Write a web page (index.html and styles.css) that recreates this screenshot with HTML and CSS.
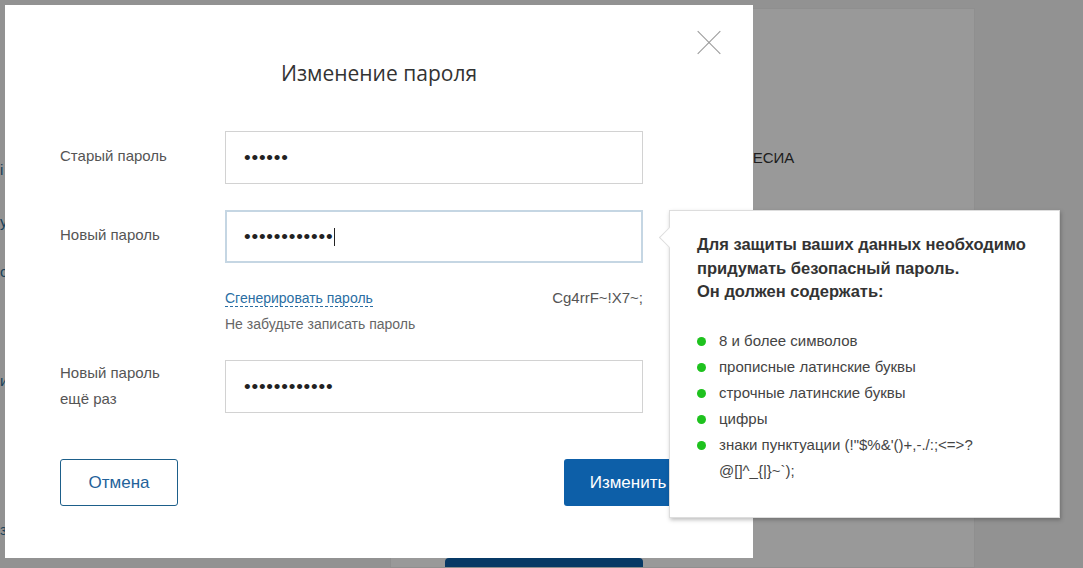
FILE: index.html
```html
<!DOCTYPE html>
<html lang="ru">
<head>
  <meta charset="UTF-8" />
  <meta name="viewport" content="width=device-width, initial-scale=1.0"/>
  <title>Изменение пароля</title>
  <link rel="stylesheet" href="styles.css">
</head>
<body>

  <div class="page">
    <div class="sidebar">
      <a class="side-link s1">і</a>
      <a class="side-link s2">у</a>
      <a class="side-link s3">с</a>
      <a class="side-link s4">и</a>
      <a class="side-link s5">з</a>
    </div>
    <div class="card">
      <div class="card-text">Учётная запись ЕСИА</div>
      <div class="card-btn"></div>
    </div>
  </div>

  <div class="overlay"></div>

  <div class="modal">
    <div class="close"></div>
    <h2>Изменение пароля</h2>

    <div class="form">
      <div class="row">
        <div class="label">Старый пароль</div>
        <div class="field">••••••</div>
      </div>

      <div class="row">
        <div class="label">Новый пароль</div>
        <div class="field focused">••••••••••••<span class="caret"></span></div>
      </div>

      <div class="gen">
        <a class="gen-link">Сгенерировать пароль</a>
        <span class="gen-value">Cg4rrF~!X7~;</span>
      </div>
      <div class="gen-note">Не забудьте записать пароль</div>

      <div class="row">
        <div class="label two-lines">Новый пароль<br>ещё раз</div>
        <div class="field">••••••••••••</div>
      </div>
    </div>

    <div class="buttons">
      <button class="btn btn-cancel">Отмена</button>
      <button class="btn btn-save">Изменить</button>
    </div>
  </div>

  <div class="hint">
    <p class="hint-title">Для защиты ваших данных необходимо придумать безопасный пароль.<br>Он должен содержать:</p>
    <ul class="rules">
      <li>8 и более символов</li>
      <li>прописные латинские буквы</li>
      <li>строчные латинские буквы</li>
      <li>цифры</li>
      <li>знаки пунктуации (!"$%&amp;'()+,-./:;&lt;=&gt;?<br>@[]^_{|}~`);</li>
    </ul>
  </div>

</body>
</html>
```

FILE: styles.css
```css
body {
  margin: 0;
  font-family: "Liberation Sans", Arial, sans-serif;
  background: #f4f4f4;
  color: #333;
  height: 100vh;
  overflow: hidden;
  position: relative;
}

/* page behind the dialog */
.page {
  display: flex;
  height: 100vh;
  overflow: hidden;
}
.sidebar {
  width: 390px;
  display: flex;
  flex-direction: column;
  padding-top: 160px;
}
.side-link {
  color: #2b6c96;
  font-size: 15px;
  line-height: 20px;
}
.s2 { margin-top: 32px; }
.s3 { margin-top: 30px; }
.s4 { margin-top: 89px; }
.s5 { margin-top: 129px; }
.card {
  width: 583px;
  margin-top: 8px;
  background: #fff;
  border: 1px solid #eee;
  position: relative;
  overflow: hidden;
}
.card-text {
  margin-top: 140px;
  padding-left: 249px;
  font-size: 15px;
  color: #333;
}
.card-btn {
  position: absolute;
  left: 54px;
  top: 549px;
  width: 198px;
  height: 44px;
  border-radius: 4px;
  background: #0d5fa8;
}
.overlay {
  position: absolute;
  inset: 0;
  background: rgba(0, 0, 0, 0.4);
}

/* dialog */
.modal {
  position: absolute;
  left: 5px;
  top: 5px;
  width: 748px;
  height: 553px;
  background: #fff;
  box-sizing: border-box;
  padding: 53px 110px 0 55px;
}
.close {
  position: absolute;
  left: 692px;
  top: 26px;
  width: 24px;
  height: 24px;
}
.close::before,
.close::after {
  content: "";
  position: absolute;
  left: -4px;
  top: 11px;
  width: 32px;
  height: 1px;
  background: #999;
  transform: rotate(45deg);
}
.close::after {
  transform: rotate(-45deg);
}
h2 {
  margin: 0 0 0 55px;
  font-family: "Open Sans", sans-serif;
  font-weight: 400;
  font-size: 21px;
  line-height: 30px;
  color: #333;
  text-align: center;
}
.form {
  margin-top: 43px;
}
.row {
  display: flex;
  margin-bottom: 26px;
}
.label {
  width: 165px;
  padding-top: 12px;
  font-size: 15px;
  line-height: 26px;
  color: #555;
}
.label.two-lines {
  padding-top: 0;
}
.field {
  width: 418px;
  height: 53px;
  box-sizing: border-box;
  border: 1px solid #d2d2d2;
  padding-left: 18px;
  font-size: 19px;
  letter-spacing: 0.8px;
  color: #222;
  display: flex;
  align-items: center;
}
.field.focused {
  border: 2px solid #c5d6e3;
  padding-left: 17px;
}
.caret {
  display: inline-block;
  width: 1px;
  height: 18px;
  background: #222;
  margin-left: 1px;
}
.gen {
  margin: 3px 0 0 165px;
  width: 418px;
  display: flex;
  justify-content: space-between;
  align-items: flex-end;
  font-size: 14px;
  line-height: 18px;
}
.gen-link {
  color: #2a6ea3;
  border-bottom: 1px dashed #2a6ea3;
  line-height: 16px;
}
.gen-value {
  color: #555;
  font-size: 15px;
}
.gen-note {
  margin: 9px 0 28px 165px;
  font-size: 14px;
  color: #666;
}
.buttons {
  display: flex;
  margin-top: 46px;
  gap: 386px;
}
.btn {
  flex-shrink: 0;
  height: 47px;
  box-sizing: border-box;
  border-radius: 3px;
  font-family: "Liberation Sans", Arial, sans-serif;
  font-size: 17px;
  cursor: pointer;
}
.btn-cancel {
  width: 118px;
  background: #fff;
  border: 1px solid #1d5f8a;
  color: #23629a;
}
.btn-save {
  width: 128px;
  background: #0d5fa8;
  border: none;
  color: #fff;
}

/* password rules tooltip */
.hint {
  position: absolute;
  left: 669px;
  top: 210px;
  width: 391px;
  height: 308px;
  box-sizing: border-box;
  background: #fff;
  border: 1px solid #ddd;
  box-shadow: 1px 2px 4px rgba(0, 0, 0, 0.25);
  padding: 22px 14px 0 27px;
}
.hint::before {
  content: "";
  position: absolute;
  left: -8px;
  top: 19px;
  width: 14px;
  height: 14px;
  background: #fff;
  border-left: 1px solid #ddd;
  border-bottom: 1px solid #ddd;
  transform: rotate(45deg);
}
.hint-title {
  margin: 0;
  font-size: 16.5px;
  font-weight: bold;
  line-height: 23.5px;
  color: #333;
}
.rules {
  list-style: none;
  margin: 24px 0 0;
  padding: 0;
}
.rules li {
  position: relative;
  padding-left: 22px;
  font-size: 15px;
  line-height: 26px;
  color: #444;
}
.rules li::before {
  content: "";
  position: absolute;
  left: 0;
  top: 9px;
  width: 9px;
  height: 9px;
  border-radius: 50%;
  background: #1ec21e;
}
```
